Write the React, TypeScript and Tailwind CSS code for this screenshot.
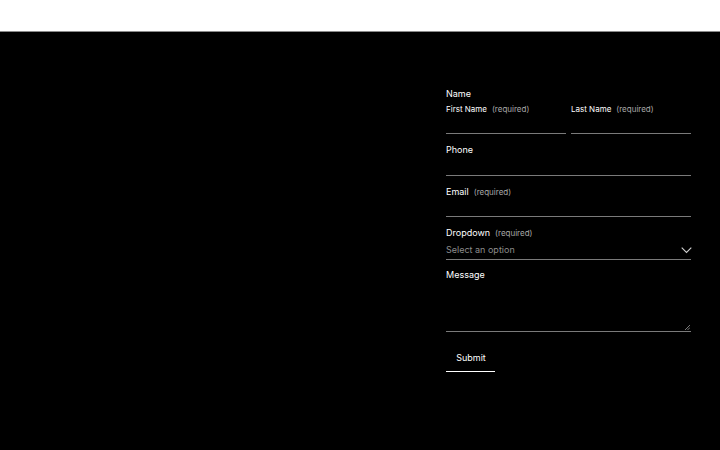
const font = { fontFamily: "Inter, 'Open Sans', sans-serif" };

function Req() {
  return <span className="ml-[5px] text-[8px] text-[#a8a8a8]">(required)</span>;
}

export default function App() {
  return (
    <div className="flex h-[450px] w-[720px] flex-col bg-white" style={font}>
      <div className="h-[32px] border-b border-[#8a8a8a] bg-white" />
      <section className="flex flex-1 justify-end bg-black pr-[29px] pt-[56px]">
        <form className="flex w-[245px] flex-col text-white">
          {/* Name */}
          <div className="text-[9px] leading-[12px]">Name</div>
          <div className="mt-[4px] flex gap-[5px]">
            <div className="flex flex-1 flex-col">
              <div className="text-[8px] leading-[11px]">
                First Name
                <Req />
              </div>
              <div className="h-[19px] border-b border-[#7a7a7a]" />
            </div>
            <div className="flex flex-1 flex-col">
              <div className="text-[8px] leading-[11px]">
                Last Name
                <Req />
              </div>
              <div className="h-[19px] border-b border-[#7a7a7a]" />
            </div>
          </div>

          {/* Phone */}
          <div className="mt-[10px] text-[9px] leading-[12px]">Phone</div>
          <div className="h-[20px] border-b border-[#7a7a7a]" />

          {/* Email */}
          <div className="mt-[10px] text-[9px] leading-[12px]">
            Email
            <Req />
          </div>
          <div className="h-[19px] border-b border-[#7a7a7a]" />

          {/* Dropdown */}
          <div className="mt-[10px] text-[9px] leading-[12px]">
            Dropdown
            <Req />
          </div>
          <div className="mt-[5px] flex h-[16px] items-start justify-between border-b border-[#7a7a7a]">
            <span className="text-[9px] leading-[12px] text-[#8c8c8c]">Select an option</span>
            <svg width="11" height="7" viewBox="0 0 11 7" className="mr-[-1px] mt-[3px]">
              <path d="M0.7 0.7 L5.5 5.5 L10.3 0.7" fill="none" stroke="#d0d0d0" strokeWidth="1.1" />
            </svg>
          </div>

          {/* Message */}
          <div className="mt-[9px] text-[9px] leading-[12px]">Message</div>
          <div className="relative h-[51px] border-b border-[#7a7a7a]">
            <svg width="5" height="5" viewBox="0 0 5 5" className="absolute bottom-[1px] right-[1px]">
              <path d="M5 0 L0 5 M5 2.5 L2.5 5" stroke="#9a9a9a" strokeWidth="0.8" />
            </svg>
          </div>

          <div className="mt-[11px]">
            <button
              type="button"
              className="h-[28px] w-[49px] border-b border-white pl-[1px] text-[9px] text-white"
            >
              Submit
            </button>
          </div>
        </form>
      </section>
    </div>
  );
}
